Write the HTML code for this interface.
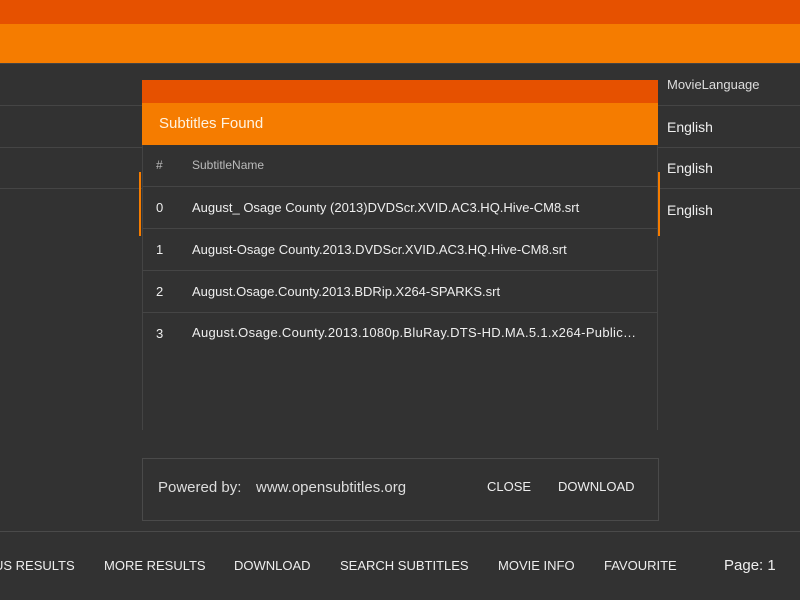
<html><head><style>
body{margin:0;width:800px;height:600px;background:#323232;font-family:"Liberation Sans",sans-serif;color:#eee;position:relative;overflow:hidden}
div{position:absolute;box-sizing:border-box}
.t{font-size:14px;white-space:nowrap}
.hl{height:1px;background:#454545}
</style></head><body>
<div style="left:0;top:0;width:800px;height:24px;background:#e65100"></div>
<div style="left:0;top:24px;width:800px;height:39px;background:#f57c00"></div>
<div style="left:0;top:63px;width:800px;height:1px;background:#444"></div>
<div class="hl" style="left:0;top:105px;width:800px"></div>
<div class="hl" style="left:0;top:147px;width:800px"></div>
<div class="hl" style="left:0;top:188px;width:800px"></div>
<div class="t" style="left:667px;top:77px;font-size:13px;color:#ddd">MovieLanguage</div>
<div class="t" style="left:667px;top:119px">English</div>
<div class="t" style="left:667px;top:160px">English</div>
<div class="t" style="left:667px;top:202px">English</div>
<div style="left:142px;top:80px;width:516px;height:350px;background:#323232;border-left:1px solid #444;border-right:1px solid #444"></div>
<div style="left:142px;top:80px;width:516px;height:23px;background:#e65100"></div>
<div style="left:142px;top:103px;width:516px;height:42px;background:#f57c00"></div>
<div class="t" style="left:159px;top:115px;font-size:15px;color:#fff3e0">Subtitles Found</div>
<div style="left:139px;top:172px;width:2px;height:64px;background:#f57c00"></div>
<div style="left:658px;top:172px;width:2px;height:64px;background:#f57c00"></div>
<div class="t" style="left:156px;top:158px;font-size:12px;color:#bbb">#</div>
<div class="t" style="left:192px;top:158px;font-size:12px;color:#bbb">SubtitleName</div>
<div class="hl" style="left:142px;top:186px;width:516px"></div>
<div class="t" style="left:156px;top:200px;font-size:13px">0</div>
<div class="t" style="left:192px;top:200px;font-size:13px">August_ Osage County (2013)DVDScr.XVID.AC3.HQ.Hive-CM8.srt</div>
<div class="hl" style="left:142px;top:228px;width:516px"></div>
<div class="t" style="left:156px;top:242px;font-size:13px">1</div>
<div class="t" style="left:192px;top:242px;font-size:13px">August-Osage County.2013.DVDScr.XVID.AC3.HQ.Hive-CM8.srt</div>
<div class="hl" style="left:142px;top:270px;width:516px"></div>
<div class="t" style="left:156px;top:284px;font-size:13px">2</div>
<div class="t" style="left:192px;top:284px;font-size:13px">August.Osage.County.2013.BDRip.X264-SPARKS.srt</div>
<div class="hl" style="left:142px;top:312px;width:516px"></div>
<div class="t" style="left:156px;top:326px;font-size:13px">3</div>
<div class="t" style="left:192px;top:325px;font-size:13px;letter-spacing:0.3px">August.Osage.County.2013.1080p.BluRay.DTS-HD.MA.5.1.x264-Public…</div>
<div style="left:142px;top:458px;width:517px;height:63px;border:1px solid #4a4a4a"></div>
<div class="t" style="left:158px;top:479px;font-size:15px;color:#ddd">Powered by:</div>
<div class="t" style="left:256px;top:479px;font-size:15px;color:#ddd">www.opensubtitles.org</div>
<div class="t" style="left:487px;top:479px;font-size:13px">CLOSE</div>
<div class="t" style="left:558px;top:479px;font-size:13px">DOWNLOAD</div>
<div style="left:0;top:531px;width:800px;height:1px;background:#4a4a4a"></div>
<div class="t" style="left:-6px;top:558px;font-size:13px">US RESULTS</div>
<div class="t" style="left:104px;top:558px;font-size:13px">MORE RESULTS</div>
<div class="t" style="left:234px;top:558px;font-size:13px">DOWNLOAD</div>
<div class="t" style="left:340px;top:558px;font-size:13px">SEARCH SUBTITLES</div>
<div class="t" style="left:498px;top:558px;font-size:13px">MOVIE INFO</div>
<div class="t" style="left:604px;top:558px;font-size:13px">FAVOURITE</div>
<div class="t" style="left:724px;top:557px;font-size:15px">Page: 1</div>
</body></html>
